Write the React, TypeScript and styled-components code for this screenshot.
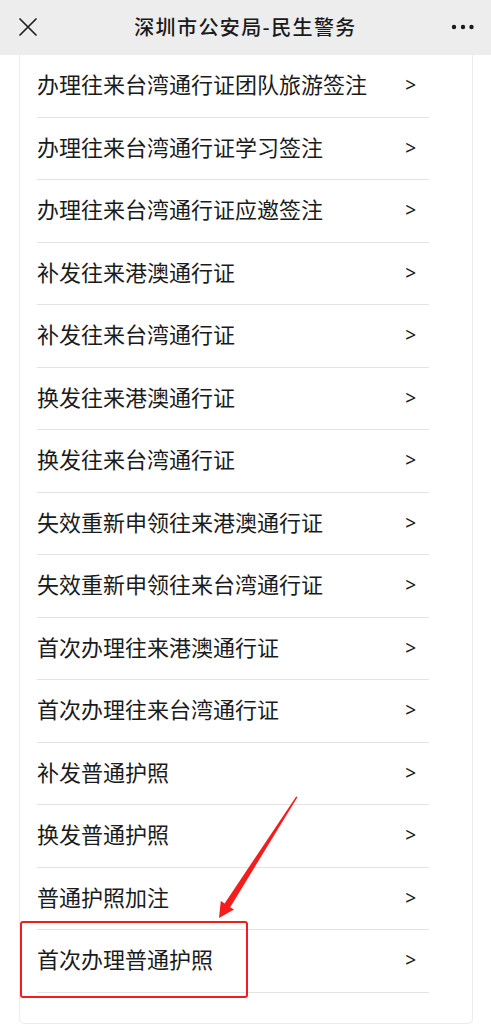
import React from 'react';
import styled, { createGlobalStyle } from 'styled-components';

const GlobalStyle = createGlobalStyle`
  html, body {
    margin: 0;
    padding: 0;
    background: #ffffff;
  }
  body {
    font-family: 'Noto Sans CJK SC', 'Noto Sans', sans-serif;
  }
`;

const Page = styled.div`
  position: relative;
  width: 491px;
  height: 1024px;
  overflow: hidden;
  background: #ffffff;
`;

const NavBar = styled.div`
  height: 55px;
  background: #ededed;
  display: grid;
  grid-template-columns: 56px 1fr 56px;
  align-items: center;
`;

const NavButton = styled.div`
  display: flex;
  align-items: center;
  justify-content: center;
  height: 55px;
  color: #1a1a1a;
  padding-bottom: 2px;
  box-sizing: border-box;
`;

const NavTitle = styled.div`
  text-align: center;
  font-size: 20px;
  font-weight: 500;
  color: #1a1a1a;
  letter-spacing: 1.4px;
  padding-bottom: 2px;
`;

const Card = styled.div`
  margin: 0 18px 0 19px;
  background: #fff;
  border: 1px solid #ececec;
  border-top: none;
  border-radius: 0 0 5px 5px;
  padding: 0 43px 30px 17px;
`;

const Row = styled.div`
  height: 62.5px;
  box-sizing: border-box;
  border-bottom: 1px solid #e3e3e3;
  display: flex;
  align-items: center;
  justify-content: space-between;
  padding-bottom: 5px;
`;

const RowLabel = styled.span`
  font-size: 22px;
  color: #1b1b1b;
  letter-spacing: 0;
`;

const Chevron = styled.span`
  font-family: 'Noto Sans', 'Liberation Sans', sans-serif;
  font-size: 19px;
  line-height: 1;
  color: #1b1b1b;
  margin-right: 13px;
  padding-top: 5px;
`;

const Highlight = styled.div`
  position: absolute;
  left: 20px;
  top: 921px;
  width: 228px;
  height: 77px;
  box-sizing: border-box;
  border: 2px solid #f41d1d;
  border-radius: 3px;
  pointer-events: none;
`;

const Annotation = styled.svg`
  position: absolute;
  left: 0;
  top: 0;
  pointer-events: none;
`;

const items = [
  '办理往来台湾通行证团队旅游签注',
  '办理往来台湾通行证学习签注',
  '办理往来台湾通行证应邀签注',
  '补发往来港澳通行证',
  '补发往来台湾通行证',
  '换发往来港澳通行证',
  '换发往来台湾通行证',
  '失效重新申领往来港澳通行证',
  '失效重新申领往来台湾通行证',
  '首次办理往来港澳通行证',
  '首次办理往来台湾通行证',
  '补发普通护照',
  '换发普通护照',
  '普通护照加注',
  '首次办理普通护照',
];

const App: React.FC = () => {
  return (
    <Page>
      <GlobalStyle />
      <NavBar>
        <NavButton>
          <svg width="20" height="20" viewBox="0 0 20 20">
            <path d="M2 2 L18 18 M18 2 L2 18" stroke="#1f1f1f" strokeWidth="1.7" strokeLinecap="round" />
          </svg>
        </NavButton>
        <NavTitle>深圳市公安局-民生警务</NavTitle>
        <NavButton>
          <svg width="24" height="6" viewBox="0 0 24 6">
            <circle cx="3" cy="3" r="2.2" fill="#1a1a1a" />
            <circle cx="12" cy="3" r="2.2" fill="#1a1a1a" />
            <circle cx="20.5" cy="3" r="2.2" fill="#1a1a1a" />
          </svg>
        </NavButton>
      </NavBar>
      <Card>
        {items.map((label) => (
          <Row key={label}>
            <RowLabel>{label}</RowLabel>
            <Chevron>&gt;</Chevron>
          </Row>
        ))}
      </Card>

      {/* 标注：红框和箭头 */}
      <Highlight />
      <Annotation width="491" height="1024" viewBox="0 0 491 1024">
        <polygon
          points="296.8,796.8 297.4,797.2 230.2,907.2 234,909.6 219,918 220.8,901 224.6,903.4 296.2,796.4"
          fill="#f41d1d"
        />
      </Annotation>
    </Page>
  );
};

export default App;
